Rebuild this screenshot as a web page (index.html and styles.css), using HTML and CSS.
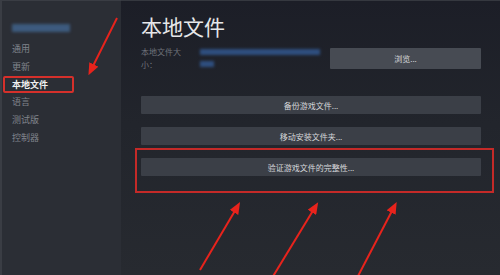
FILE: index.html
```html
<!DOCTYPE html>
<html lang="zh-CN">
<head>
    <meta charset="UTF-8">
    <title>本地文件</title>
    <link rel="stylesheet" href="styles.css">
</head>
<body>
    <div class="window">
        <aside class="sidebar">
            <div class="game-name"></div>
            <ul class="menu">
                <li>通用</li>
                <li>更新</li>
                <li class="active">本地文件</li>
                <li>语言</li>
                <li>测试版</li>
                <li>控制器</li>
            </ul>
        </aside>

        <main class="content">
            <h1>本地文件</h1>
            <div class="size-row">
                <div class="size-label">本地文件大小：</div>
                <div class="size-value">
                    <span class="blur-line long"></span>
                    <span class="blur-line short"></span>
                </div>
                <button class="btn browse">浏览...</button>
            </div>

            <div class="actions">
                <button class="btn">备份游戏文件...</button>
                <button class="btn">移动安装文件夹...</button>
                <div class="highlight">
                    <button class="btn">验证游戏文件的完整性...</button>
                </div>
            </div>
        </main>
    </div>

    <svg class="arrows" width="500" height="275" viewBox="0 0 500 275">
        <defs>
            <marker id="head" markerWidth="6" markerHeight="5" refX="2" refY="2.5" orient="auto">
                <path d="M0,0 L6,2.5 L0,5 Z" fill="#e8231c"/>
            </marker>
        </defs>
        <line x1="117" y1="18" x2="92" y2="68" stroke="#e8231c" stroke-width="2" marker-end="url(#head)"/>
        <line x1="200" y1="270" x2="236" y2="209" stroke="#e8231c" stroke-width="2" marker-end="url(#head)"/>
        <line x1="272" y1="278" x2="314" y2="209" stroke="#e8231c" stroke-width="2" marker-end="url(#head)"/>
        <line x1="357" y1="278" x2="393" y2="209" stroke="#e8231c" stroke-width="2" marker-end="url(#head)"/>
    </svg>
</body>
</html>
```

FILE: styles.css
```css
body {
    margin: 0;
    width: 500px;
    height: 275px;
    overflow: hidden;
    font-family: "Noto Sans CJK SC", "Noto Sans", sans-serif;
    background-color: #272a30;
    position: relative;
}
.window {
    display: flex;
    height: 275px;
}
.sidebar {
    width: 121px;
    flex-shrink: 0;
    background-color: #2b2e35;
    border-left: 2px solid #3a3d44;
    border-top: 1px solid #3a3d44;
    box-sizing: border-box;
}
.game-name {
    width: 58px;
    height: 8px;
    margin: 23px 0 0 10px;
    background-color: #3d5a7e;
    filter: blur(1.5px);
}
.menu {
    list-style-type: none;
    padding: 0;
    margin: 8px 0 0 0;
}
.menu li {
    font-size: 9px;
    line-height: 18px;
    color: #80848c;
    padding-left: 10px;
}
.menu li.active {
    color: #f0f0f0;
    font-weight: bold;
    border: 2px solid #d5302b;
    border-radius: 2px;
    margin-left: 1px;
    padding-left: 7px;
    width: 60px;
    line-height: 13px;
}
.content {
    flex: 1;
    padding: 10px 19px 0 20px;
    background: linear-gradient(#1c1e27, #22252c 45%, #272a30);
    border-top: 1px solid #35383f;
}
.content h1 {
    margin: 0;
    font-size: 21px;
    font-weight: normal;
    line-height: 30px;
    color: #e6e7e9;
}
.size-row {
    display: flex;
    align-items: center;
    margin-top: 4px;
}
.size-label {
    width: 44px;
    font-size: 8px;
    line-height: 13px;
    color: #6f737b;
}
.size-value {
    display: flex;
    flex-direction: column;
    gap: 6px;
    margin-left: 15px;
    width: 124px;
}
.blur-line {
    height: 6px;
    background-color: #2f4f80;
    filter: blur(1.5px);
}
.blur-line.long {
    width: 120px;
}
.blur-line.short {
    width: 14px;
}
.btn {
    display: block;
    width: 100%;
    height: 18px;
    border: none;
    border-radius: 1px;
    background-color: #3b3f47;
    color: #d6d7da;
    font-family: inherit;
    font-size: 8px;
    padding: 0;
}
.browse {
    width: 151px;
    height: 21px;
    margin-left: auto;
    background-color: #474b53;
}
.actions {
    display: flex;
    flex-direction: column;
    gap: 13px;
    margin-top: 25px;
}
.highlight {
    border: 2px solid #c42a28;
    padding: 8px 11px 15px 4px;
    margin: -10px -13px 0 -6px;
}
.arrows {
    position: absolute;
    left: 0;
    top: 0;
    pointer-events: none;
}
```
